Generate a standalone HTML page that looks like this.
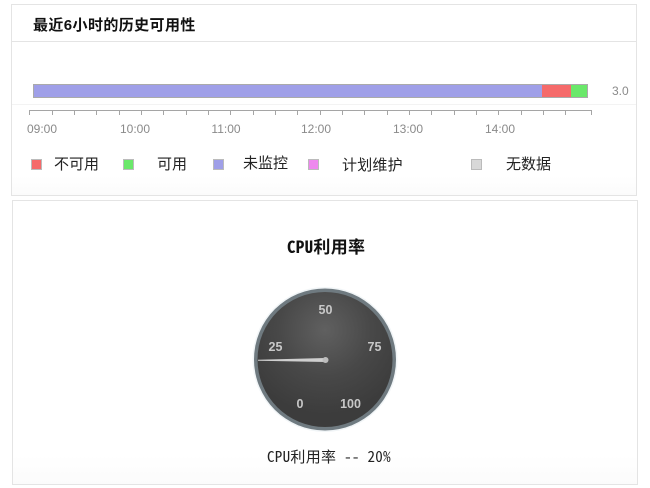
<!DOCTYPE html>
<html><head><meta charset="utf-8">
<style>
html,body{margin:0;padding:0;background:#fff;}
body{width:650px;height:488px;position:relative;overflow:hidden;font-family:"Liberation Sans","Noto Sans CJK SC",sans-serif;}
.a{position:absolute;white-space:nowrap;}
.p{position:absolute;box-sizing:border-box;border:1px solid #e4e4e4;background:linear-gradient(to bottom,#fff 90%,#fbfbfb);}
.lab{position:absolute;top:122px;font-size:12px;line-height:14px;color:#8a8a8a;width:40px;text-align:center;}
.sw{position:absolute;top:159px;width:9px;height:9px;border:1px solid #bbb;}
.lg{position:absolute;font-size:15px;line-height:18px;color:#222;white-space:nowrap;}
.tk{position:absolute;top:110px;width:1px;height:5px;background:#a5a5a5;}
.mono{font-family:"Noto Sans Mono CJK SC","WenQuanYi Zen Hei Mono","WenQuanYi Zen Hei",monospace;}
</style></head><body>
<div class="p" style="left:11px;top:4px;width:626px;height:192px;"></div>
<div class="a" style="left:12px;top:41px;width:624px;height:1px;background:#e4e4e4;"></div>
<div class="a" style="left:12px;top:104px;width:624px;height:1px;background:#f3f3f3;"></div>
<div class="a" style="left:33px;top:17px;font-size:15px;line-height:18px;font-weight:bold;color:#111;letter-spacing:.4px;">最近6小时的历史可用性</div>

<div class="a" style="left:33px;top:84px;width:555px;height:14px;box-sizing:border-box;border:1px solid #aaa;background:#9f9fe8;"></div>
<div class="a" style="left:542px;top:85px;width:29px;height:12px;background:#f56a6a;"></div>
<div class="a" style="left:571px;top:85px;width:16px;height:12px;background:#6ae86a;"></div>
<div class="a" style="left:612px;top:84px;font-size:12px;line-height:14px;color:#8a8a8a;">3.0</div>

<div class="a" style="left:29px;top:110px;width:563px;height:1px;background:#a5a5a5;"></div>
<div class="tk" style="left:29px"></div><div class="tk" style="left:52px"></div><div class="tk" style="left:74px"></div><div class="tk" style="left:96px"></div><div class="tk" style="left:119px"></div><div class="tk" style="left:141px"></div><div class="tk" style="left:163px"></div><div class="tk" style="left:186px"></div><div class="tk" style="left:208px"></div><div class="tk" style="left:230px"></div><div class="tk" style="left:253px"></div><div class="tk" style="left:275px"></div><div class="tk" style="left:297px"></div><div class="tk" style="left:320px"></div><div class="tk" style="left:342px"></div><div class="tk" style="left:364px"></div><div class="tk" style="left:387px"></div><div class="tk" style="left:409px"></div><div class="tk" style="left:431px"></div><div class="tk" style="left:454px"></div><div class="tk" style="left:476px"></div><div class="tk" style="left:498px"></div><div class="tk" style="left:521px"></div><div class="tk" style="left:543px"></div><div class="tk" style="left:565px"></div><div class="tk" style="left:591px"></div>

<div class="lab" style="left:22px">09:00</div>
<div class="lab" style="left:115px">10:00</div>
<div class="lab" style="left:206px">11:00</div>
<div class="lab" style="left:296px">12:00</div>
<div class="lab" style="left:388px">13:00</div>
<div class="lab" style="left:480px">14:00</div>

<div class="sw" style="left:31px;background:#f56a6a"></div>
<div class="lg" style="left:54px;top:156px">不可用</div>
<div class="sw" style="left:123px;background:#6ae86a"></div>
<div class="lg" style="left:157px;top:156px">可用</div>
<div class="sw" style="left:213px;background:#9f9fe8"></div>
<div class="lg" style="left:243px;top:155px">未监控</div>
<div class="sw" style="left:308px;background:#ee88ee"></div>
<div class="lg" style="left:342px;top:157px;letter-spacing:.2px">计划维护</div>
<div class="sw" style="left:471px;background:#d8d8d8"></div>
<div class="lg" style="left:506px;top:156px">无数据</div>

<div class="p" style="left:12px;top:200px;width:626px;height:285px;"></div>
<div class="a mono" style="left:287px;top:236px;font-size:17px;line-height:20px;font-weight:bold;color:#111;letter-spacing:.3px;">CPU利用率</div>

<svg class="a" style="left:250px;top:284px;" width="152" height="152" viewBox="250 284 152 152">
<defs>
<radialGradient id="g" gradientUnits="userSpaceOnUse" cx="325" cy="330" r="85">
<stop offset="0" stop-color="#606060"/><stop offset=".55" stop-color="#484848"/><stop offset="1" stop-color="#3c3c3c"/>
</radialGradient>
</defs>
<circle cx="325" cy="359.5" r="72.5" fill="#e8eef2" opacity=".6"/>
<circle cx="325" cy="359.5" r="71" fill="#6f7a80"/>
<circle cx="325" cy="359.5" r="67.5" fill="url(#g)"/>
<g font-family="Liberation Sans,sans-serif" font-size="12.5" font-weight="bold" fill="#c8c8c8" text-anchor="middle">
<text x="325.5" y="314">50</text>
<text x="275.5" y="351">25</text>
<text x="374.5" y="351">75</text>
<text x="300" y="408">0</text>
<text x="350.5" y="408">100</text>
</g>
<polygon points="258,359.8 325.5,358 325.5,362 258,360.8" fill="#cfcfcf"/>
<circle cx="325.5" cy="360" r="3" fill="#bdbdbd"/>
</svg>

<div class="a mono" style="left:267px;top:448px;font-size:15px;line-height:17px;letter-spacing:.3px;color:#222;">CPU利用率 -- 20%</div>
</body></html>
